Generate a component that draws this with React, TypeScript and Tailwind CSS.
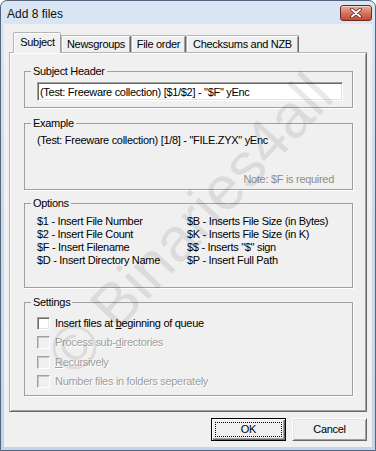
import React from 'react';

const tabs = [
  { label: 'Subject', w: 'w-[48px]', active: true },
  { label: 'Newsgroups', w: 'w-[70px]', active: false },
  { label: 'File order', w: 'w-[55px]', active: false },
  { label: 'Checksums and NZB', w: 'w-[113px]', active: false },
];

const options: [string, string][] = [
  ['$1 - Insert File Number', '$B - Inserts File Size (in Bytes)'],
  ['$2 - Insert File Count', '$K - Inserts File Size (in K)'],
  ['$F - Insert Filename', '$$ - Inserts "$" sign'],
  ['$D - Insert Directory Name', '$P - Insert Full Path'],
];

function Legend({ children }: { children: React.ReactNode }) {
  return <legend className="ml-[6px] px-[2px] leading-[13px]">{children}</legend>;
}

function CheckRow({ disabled, children }: { disabled?: boolean; children: React.ReactNode }) {
  return (
    <div className="flex items-center h-[13px]">
      <span
        className={
          disabled
            ? 'w-[13px] h-[13px] bg-[#f0f0f0] border border-t-[#a0a0a0] border-l-[#a0a0a0] border-r-white border-b-white shadow-[inset_1px_1px_0_#c8c8c8]'
            : 'w-[13px] h-[13px] bg-white border border-t-[#a0a0a0] border-l-[#a0a0a0] border-r-white border-b-white shadow-[inset_1px_1px_0_#696969,inset_-1px_-1px_0_#e3e3e3]'
        }
      />
      <span
        className={
          disabled
            ? 'ml-[5px] leading-[13px] text-[#a0a0a0] [text-shadow:1px_1px_0_#fff]'
            : 'ml-[5px] leading-[13px]'
        }
      >
        {children}
      </span>
    </div>
  );
}

export default function App() {
  return (
    <div className="relative w-[376px] h-[451px] overflow-hidden font-['Liberation_Sans',Arial,sans-serif] text-[11px] tracking-[-0.3px] text-black select-none">
      <div className="flex flex-col h-full border border-[#55657d] rounded-t-[7px] bg-gradient-to-b from-[#dae6f4] via-[#c8daf0] to-[#c2d5ed]">
        {/* title bar */}
        <div className="flex items-start justify-between h-[23px]">
          <span className="ml-[6px] mt-[6px] text-[12px] tracking-normal leading-[15px] text-[#111]">Add 8 files</span>
          <div className="mt-[4px] mr-[3px] w-[32px] h-[16px] rounded-[3px] border border-[#6b2a1e] bg-gradient-to-b from-[#eab0a2] via-[#d67660] to-[#c24a30] shadow-[inset_0_1px_0_#f6d2c8] flex items-center justify-center">
            <svg width="12" height="10" viewBox="0 0 12 10">
              <path d="M2 1.5 L10 8.5 M10 1.5 L2 8.5" stroke="#5a1c12" strokeWidth="3.6" strokeLinecap="round" />
              <path d="M2 1.5 L10 8.5 M10 1.5 L2 8.5" stroke="#ffffff" strokeWidth="2" strokeLinecap="round" />
            </svg>
          </div>
        </div>

        {/* client area */}
        <div className="flex-1 mx-[3px] mb-[3px] bg-[#f0f0f0] px-[5px] pt-[8px] flex flex-col">
          <div className="flex items-end h-[20px] pl-[4px]">
            {tabs.map((t) =>
              t.active ? (
                <div
                  key={t.label}
                  className={`${t.w} h-[21px] -mb-px relative z-10 bg-[#f0f0f0] border-l border-t border-[#b4b4b4] border-r-[#696969] rounded-t-[2px] shadow-[inset_1px_1px_0_#fff,inset_-1px_0_0_#a0a0a0] flex items-center justify-center pb-[1px]`}
                >
                  {t.label}
                </div>
              ) : (
                <div
                  key={t.label}
                  className={`${t.w} h-[17px] bg-[#f0f0f0] border-l border-t border-r border-[#b4b4b4] border-r-[#696969] rounded-t-[2px] shadow-[inset_1px_1px_0_#fff,inset_-1px_0_0_#a0a0a0] flex items-center justify-center`}
                >
                  {t.label}
                </div>
              ),
            )}
          </div>

          {/* tab panel */}
          <div className="h-[360px] border border-t-[#b4b4b4] border-l-[#b4b4b4] border-r-[#696969] border-b-[#696969] shadow-[inset_1px_1px_0_#fff,inset_-1px_-1px_0_#a0a0a0] pl-[14px] pr-[13px] pt-[12px] flex flex-col">
            <fieldset className="h-[43px] border border-[#a0a0a0] shadow-[1px_1px_0_#fff]">
              <Legend>Subject Header</Legend>
              <div className="pl-[12px] pt-[4px]">
                <input
                  readOnly
                  value={'(Test: Freeware collection) [$1/$2] - "$F" yEnc'}
                  className="block w-[306px] h-[19px] bg-white pl-[2px] text-[11px] tracking-[-0.3px] leading-[15px] outline-none border border-t-[#a0a0a0] border-l-[#a0a0a0] border-r-white border-b-white shadow-[inset_1px_1px_0_#696969,inset_-1px_-1px_0_#e3e3e3]"
                />
              </div>
            </fieldset>

            <fieldset className="mt-[9px] h-[73px] border border-[#a0a0a0] shadow-[1px_1px_0_#fff]">
              <Legend>Example</Legend>
              <div className="pl-[12px] pr-[18px] pt-[4px] flex flex-col">
                <span className="leading-[13px]">(Test: Freeware collection) [1/8] - "FILE.ZYX" yEnc</span>
                <span className="mt-[26px] self-end leading-[13px] text-[#8d8d8d]">Note: $F is required</span>
              </div>
            </fieldset>

            <fieldset className="mt-[7px] h-[91px] border border-[#a0a0a0] shadow-[1px_1px_0_#fff]">
              <Legend>Options</Legend>
              <div className="pl-[12px] pt-[5px] grid grid-cols-[150px_1fr]">
                {options.map(([a, b]) => (
                  <React.Fragment key={a}>
                    <span className="leading-[13px]">{a}</span>
                    <span className="leading-[13px]">{b}</span>
                  </React.Fragment>
                ))}
              </div>
            </fieldset>

            <fieldset className="mt-[8px] h-[100px] border border-[#a0a0a0] shadow-[1px_1px_0_#fff]">
              <Legend>Settings</Legend>
              <div className="pl-[12px] pt-[8px] flex flex-col gap-[6.33px]">
                <CheckRow>
                  Insert files at <u>b</u>eginning of queue
                </CheckRow>
                <CheckRow disabled>
                  Process sub-<u>d</u>irectories
                </CheckRow>
                <CheckRow disabled>
                  <u>R</u>ecursively
                </CheckRow>
                <CheckRow disabled>Number files in folders seperately</CheckRow>
              </div>
            </fieldset>
          </div>

          {/* buttons */}
          <div className="mt-[6px] flex justify-end gap-[6px]">
            <button className="w-[75px] h-[23px] border border-black bg-[#f0f0f0] shadow-[inset_1px_1px_0_#fff,inset_-1px_-1px_0_#696969,inset_-2px_-2px_0_#a0a0a0] flex p-[3px]">
              <span className="flex-1 border border-dotted border-black flex items-center justify-center leading-[13px]">
                OK
              </span>
            </button>
            <button className="w-[75px] h-[23px] border border-t-white border-l-white border-r-[#696969] border-b-[#696969] bg-[#f0f0f0] shadow-[inset_1px_1px_0_#e3e3e3,inset_-1px_-1px_0_#a0a0a0] flex items-center justify-center leading-[13px]">
              Cancel
            </button>
          </div>
        </div>
      </div>

      {/* watermark */}
      <div className="pointer-events-none absolute left-[190px] top-[224px] -translate-x-1/2 -translate-y-1/2 -rotate-[47deg] whitespace-nowrap text-[62px] tracking-normal leading-none text-black/[0.085] font-['Liberation_Sans',Arial,sans-serif]">
        © Binaries4all
      </div>
    </div>
  );
}
